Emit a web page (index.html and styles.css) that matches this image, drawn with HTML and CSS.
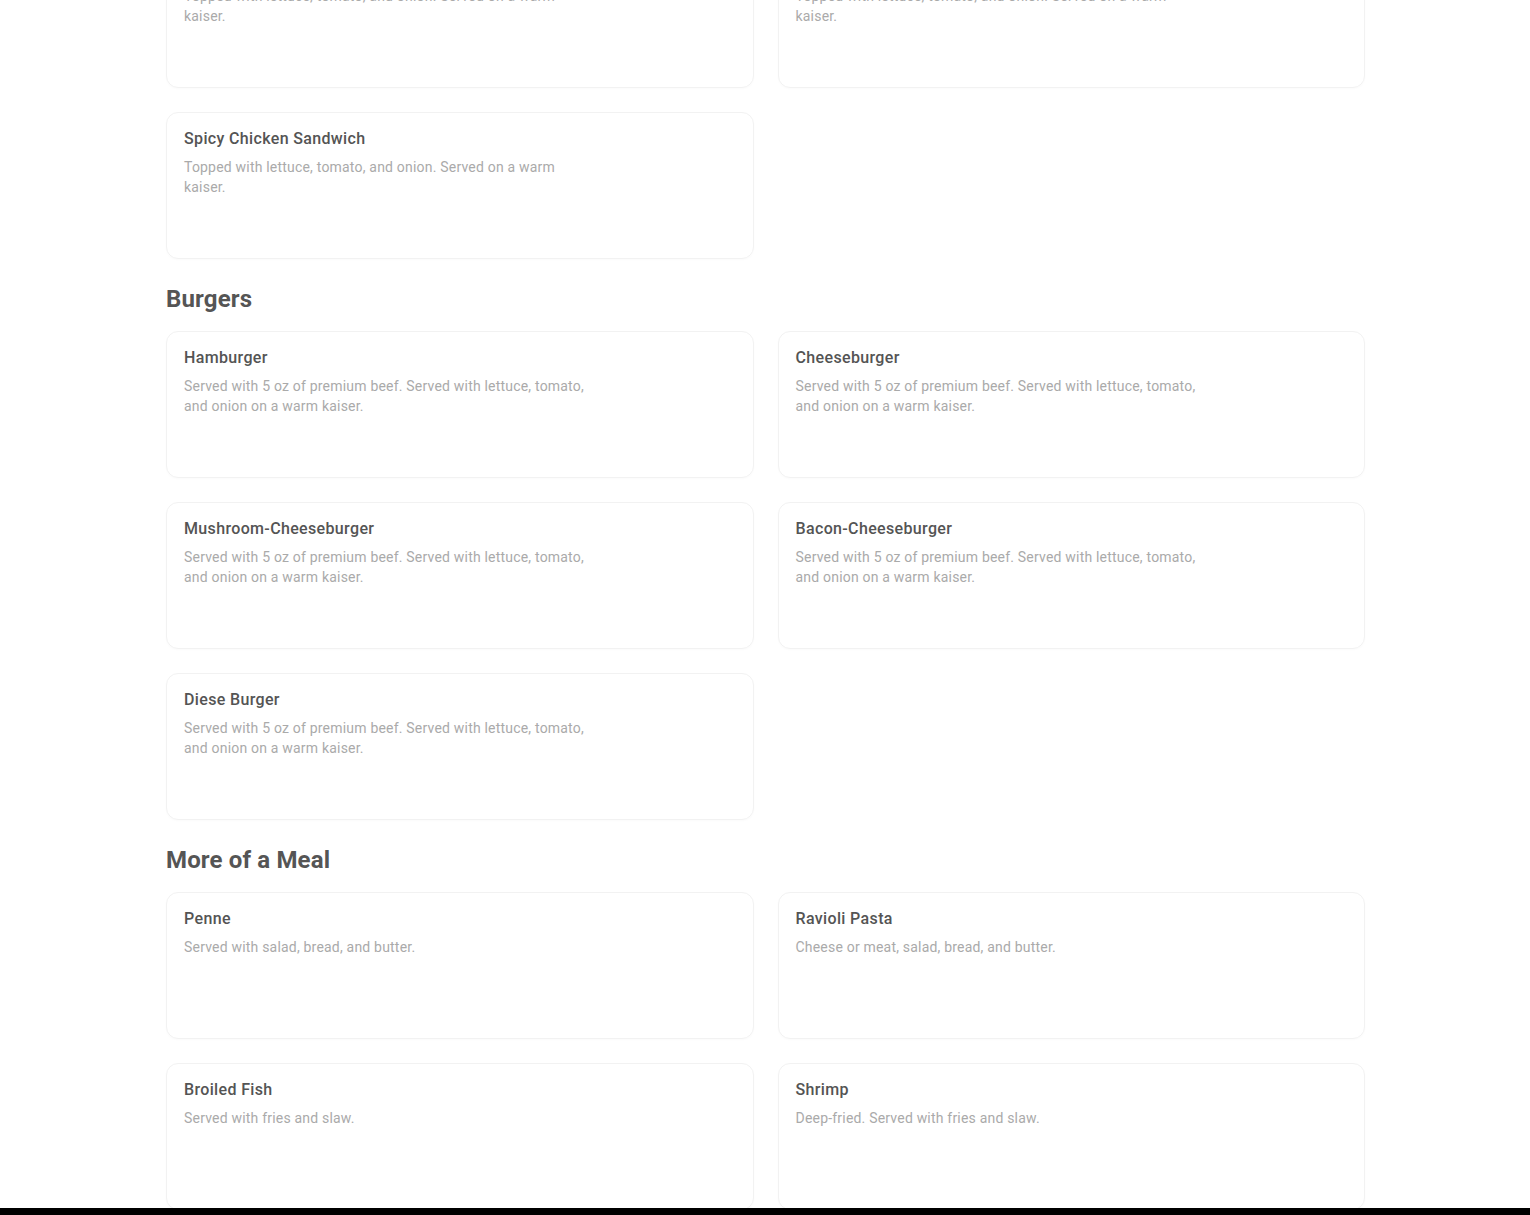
FILE: index.html
```html
<!DOCTYPE html>
<html lang="en">
<head>
<meta charset="utf-8">
<title>Menu</title>
<link rel="stylesheet" href="styles.css">
</head>
<body>
<main class="menu">
  <section class="section section-first">
    <div class="grid">
      <div class="card">
        <div class="card-title">Chicken Sandwich</div>
        <div class="card-desc">Topped with lettuce, tomato, and onion. Served on a warm kaiser.</div>
      </div>
      <div class="card">
        <div class="card-title">Chicken Burger</div>
        <div class="card-desc">Topped with lettuce, tomato, and onion. Served on a warm kaiser.</div>
      </div>
      <div class="card">
        <div class="card-title">Spicy Chicken Sandwich</div>
        <div class="card-desc">Topped with lettuce, tomato, and onion. Served on a warm kaiser.</div>
      </div>
    </div>
  </section>

  <section class="section">
    <h2 class="section-title">Burgers</h2>
    <div class="grid">
      <div class="card">
        <div class="card-title">Hamburger</div>
        <div class="card-desc">Served with 5 oz of premium beef. Served with lettuce, tomato, and onion on a warm kaiser.</div>
      </div>
      <div class="card">
        <div class="card-title">Cheeseburger</div>
        <div class="card-desc">Served with 5 oz of premium beef. Served with lettuce, tomato, and onion on a warm kaiser.</div>
      </div>
      <div class="card">
        <div class="card-title">Mushroom-Cheeseburger</div>
        <div class="card-desc">Served with 5 oz of premium beef. Served with lettuce, tomato, and onion on a warm kaiser.</div>
      </div>
      <div class="card">
        <div class="card-title">Bacon-Cheeseburger</div>
        <div class="card-desc">Served with 5 oz of premium beef. Served with lettuce, tomato, and onion on a warm kaiser.</div>
      </div>
      <div class="card">
        <div class="card-title">Diese Burger</div>
        <div class="card-desc">Served with 5 oz of premium beef. Served with lettuce, tomato, and onion on a warm kaiser.</div>
      </div>
    </div>
  </section>

  <section class="section">
    <h2 class="section-title">More of a Meal</h2>
    <div class="grid">
      <div class="card">
        <div class="card-title">Penne</div>
        <div class="card-desc">Served with salad, bread, and butter.</div>
      </div>
      <div class="card">
        <div class="card-title">Ravioli Pasta</div>
        <div class="card-desc">Cheese or meat, salad, bread, and butter.</div>
      </div>
      <div class="card">
        <div class="card-title">Broiled Fish</div>
        <div class="card-desc">Served with fries and slaw.</div>
      </div>
      <div class="card">
        <div class="card-title">Shrimp</div>
        <div class="card-desc">Deep-fried. Served with fries and slaw.</div>
      </div>
    </div>
  </section>
</main>
<div class="bottom-bar"></div>
</body>
</html>
```

FILE: styles.css
```css
* {
  box-sizing: border-box;
}

html, body {
  margin: 0;
  padding: 0;
  background: #ffffff;
}

body {
  font-family: Roboto, "Liberation Sans", sans-serif;
  overflow: hidden;
}

.menu {
  width: 1200px;
  margin: -59px auto 0;
  padding-left: 1px;
}

.section {
  margin-top: 24px;
}

.section-first {
  margin-top: 0;
}

.section-title {
  margin: 0 0 16px;
  font-size: 24px;
  line-height: 32px;
  font-weight: 700;
  color: #555555;
  letter-spacing: 0.15px;
}

.grid {
  display: grid;
  grid-template-columns: 1fr 1fr;
  gap: 24px;
}

.card {
  height: 147px;
  border: 1px solid #f2f2f2;
  border-radius: 12px;
  padding: 16px 17px;
  box-shadow: 0 1px 2px rgba(0, 0, 0, 0.02);
}

.card-title {
  font-size: 16px;
  line-height: 20px;
  font-weight: 500;
  color: #545454;
  letter-spacing: 0.35px;
}

.card-desc {
  margin-top: 8px;
  max-width: 410px;
  font-size: 14px;
  line-height: 20px;
  color: #aaaaaa;
  letter-spacing: 0.2px;
}

.bottom-bar {
  position: fixed;
  left: 0;
  right: 0;
  bottom: 0;
  height: 7px;
  background: #000000;
}
```
